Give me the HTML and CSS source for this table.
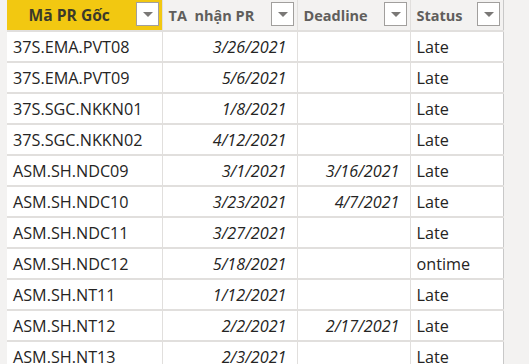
FILE: index.html
```html
<!DOCTYPE html>
<html>
<head>
<meta charset="utf-8">
<link rel="stylesheet" href="styles.css">
</head>
<body>
<div class="sheet">
  <table class="grid">
    <colgroup>
      <col class="c1"><col class="c2"><col class="c3"><col class="c4">
    </colgroup>
    <thead>
      <tr>
        <th class="hd key"><div class="hcell"><span class="htext center">Mã PR Gốc</span><span class="dd"></span></div></th>
        <th class="hd"><div class="hcell"><span class="htext">TA&nbsp; nhận PR</span><span class="dd"></span></div></th>
        <th class="hd"><div class="hcell"><span class="htext">Deadline</span><span class="dd"></span></div></th>
        <th class="hd"><div class="hcell"><span class="htext">Status</span><span class="dd"></span></div></th>
      </tr>
    </thead>
    <tbody>
      <tr><td>37S.EMA.PVT08</td><td class="dt">3/26/2021</td><td class="dt"></td><td>Late</td></tr>
      <tr><td>37S.EMA.PVT09</td><td class="dt">5/6/2021</td><td class="dt"></td><td>Late</td></tr>
      <tr><td>37S.SGC.NKKN01</td><td class="dt">1/8/2021</td><td class="dt"></td><td>Late</td></tr>
      <tr><td>37S.SGC.NKKN02</td><td class="dt">4/12/2021</td><td class="dt"></td><td>Late</td></tr>
      <tr><td>ASM.SH.NDC09</td><td class="dt">3/1/2021</td><td class="dt">3/16/2021</td><td>Late</td></tr>
      <tr><td>ASM.SH.NDC10</td><td class="dt">3/23/2021</td><td class="dt">4/7/2021</td><td>Late</td></tr>
      <tr><td>ASM.SH.NDC11</td><td class="dt">3/27/2021</td><td class="dt"></td><td>Late</td></tr>
      <tr><td>ASM.SH.NDC12</td><td class="dt">5/18/2021</td><td class="dt"></td><td>ontime</td></tr>
      <tr><td>ASM.SH.NT11</td><td class="dt">1/12/2021</td><td class="dt"></td><td>Late</td></tr>
      <tr><td>ASM.SH.NT12</td><td class="dt">2/2/2021</td><td class="dt">2/17/2021</td><td>Late</td></tr>
      <tr><td>ASM.SH.NT13</td><td class="dt">2/3/2021</td><td class="dt"></td><td>Late</td></tr>
    </tbody>
  </table>
</div>
</body>
</html>
```

FILE: styles.css
```css
html, body {
  margin: 0;
  padding: 0;
  background: #f3f2f1;
  overflow: hidden;
}
.sheet {
  padding-left: 7px;
  width: 496px;
}
.grid {
  border-collapse: collapse;
  table-layout: fixed;
  width: 496px;
  background: #ffffff;
  font-family: "Open Sans", "Noto Sans", sans-serif;
  font-size: 16.2px;
  color: #252423;
  border-right: 1px solid #c8c8c8;
}
.c1 { width: 155px; }
.c2 { width: 135px; }
.c3 { width: 113px; }
.c4 { width: 93px; }

.hd {
  height: 30px;
  padding: 0;
  background: #f3f2f1;
  border-left: 1px solid #e1dfdd;
  text-align: left;
  font-weight: bold;
  color: #605e5c;
  font-size: 14.5px;
  vertical-align: middle;
}
.hd.key {
  background: #f2c811;
  color: #3b3a2a;
  border-left: none;
  font-size: 15.6px;
}
.hcell {
  display: flex;
  align-items: center;
  height: 30px;
  padding: 0 3px 0 6px;
}
.htext {
  flex: 1;
  white-space: nowrap;
}
.htext.center {
  text-align: center;
  padding-right: 10px;
}
.dd {
  width: 21px;
  height: 22px;
  border: 1px solid #a19f9d;
  background: #ffffff;
  flex: none;
  position: relative;
  margin-top: -3px;
}
.dd::after {
  content: "";
  position: absolute;
  left: 6px;
  top: 9px;
  border-left: 5px solid transparent;
  border-right: 5px solid transparent;
  border-top: 5px solid #7a7876;
}
td {
  height: 29px;
  padding: 0 6px;
  border-top: 2px solid #e1dfdd;
  border-left: 1px solid #e1dfdd;
  white-space: nowrap;
  overflow: hidden;
}
td:first-child {
  border-left: none;
}
td.dt {
  text-align: right;
  font-style: italic;
  padding-right: 10px;
}
```
